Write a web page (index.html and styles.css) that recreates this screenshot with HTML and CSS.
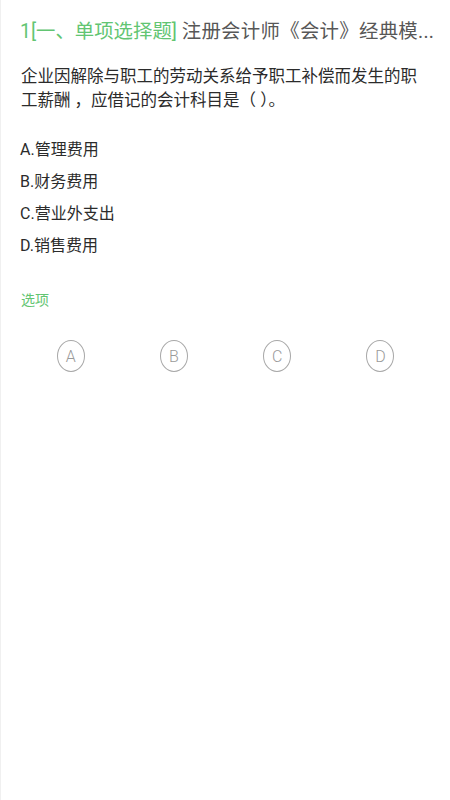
FILE: index.html
```html
<!DOCTYPE html>
<html lang="zh-CN">
<head>
<meta charset="utf-8">
<title>单项选择题</title>
<link rel="stylesheet" href="styles.css">
</head>
<body>
<div class="page">
  <div class="title"><span class="green">1[一、单项选择题]</span> <span class="gray">注册会计师《会计》经典模...</span></div>
  <div class="question">企业因解除与职工的劳动关系给予职工补偿而发生的职工薪酬 ，应借记的会计科目是（ ）。</div>
  <div class="options">
    <div class="opt">A.管理费用</div>
    <div class="opt">B.财务费用</div>
    <div class="opt">C.营业外支出</div>
    <div class="opt">D.销售费用</div>
  </div>
  <div class="label">选项</div>
  <div class="choices">
    <div class="cell"><span class="circle">A</span></div>
    <div class="cell"><span class="circle">B</span></div>
    <div class="cell"><span class="circle">C</span></div>
    <div class="cell"><span class="circle">D</span></div>
  </div>
</div>
</body>
</html>
```
FILE: styles.css
```css
html, body {
  margin: 0;
  padding: 0;
  background: #fff;
}
body {
  font-family: Roboto, "Noto Sans CJK SC", sans-serif;
}
.page {
  min-height: 800px;
  box-sizing: border-box;
  border-left: 1px solid #f0f0f0;
  padding: 19px 0 0;
}
.title {
  padding: 0 19px;
  font-size: 19.4px;
  line-height: 26px;
  white-space: nowrap;
  overflow: hidden;
}
.green { color: #62c572; }
.gray { color: #575757; letter-spacing: 0.3px; }
.question {
  margin-top: 20px;
  padding: 0 20px;
  font-size: 16.5px;
  line-height: 24px;
  color: #2b2b2b;
}
.options {
  margin-top: 21px;
  padding: 0 19px;
  display: flex;
  flex-direction: column;
}
.opt {
  font-size: 16px;
  line-height: 32px;
  color: #2b2b2b;
}
.label {
  margin-top: 28px;
  padding: 0 20px;
  font-size: 14px;
  line-height: 20px;
  color: #62c572;
}
.choices {
  margin-top: 30px;
  padding: 0 18px;
  display: grid;
  grid-template-columns: repeat(4, 1fr);
}
.cell {
  display: flex;
  justify-content: center;
}
.circle {
  box-sizing: border-box;
  width: 28px;
  height: 32px;
  border: 1px solid #a8a8a8;
  border-radius: 50%;
  display: flex;
  align-items: center;
  justify-content: center;
  font-size: 16px;
  font-weight: 300;
  color: #9a9a9a;
}
```
